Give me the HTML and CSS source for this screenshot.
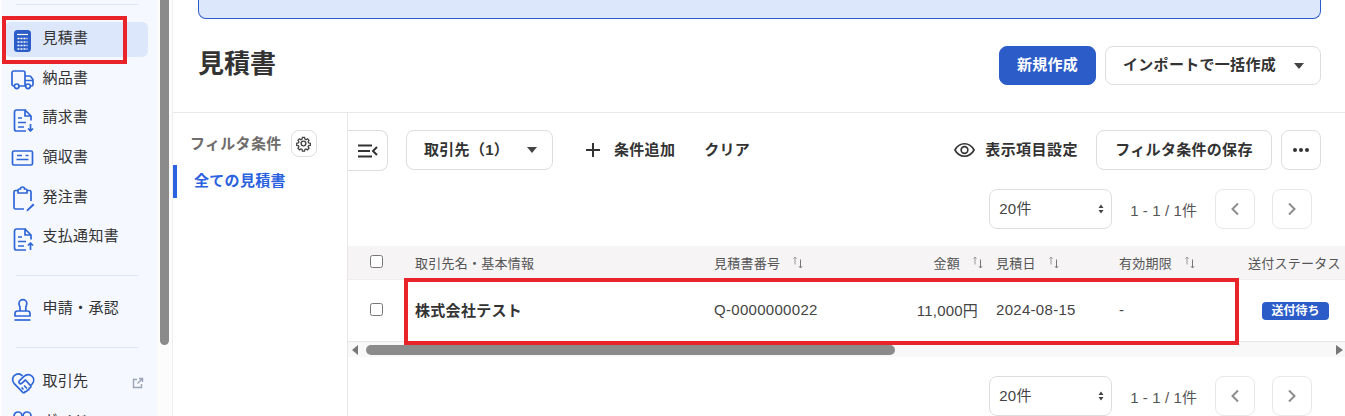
FILE: index.html
```html
<!DOCTYPE html>
<html lang="ja">
<head>
<meta charset="utf-8">
<title>見積書</title>
<link rel="stylesheet" href="styles.css">
</head>
<body>
<div class="page">
  <aside class="side">
    <nav class="nav">
      <hr class="nav-rule nav-rule-top">
      <ul class="nav-group nav-group-first">
        <li class="nav-item active">
          <svg class="nav-icon" viewBox="0 0 24 24"><rect x="3" y="2" width="17" height="22" rx="3.5" fill="#2b5cc8"/><path d="M6 6.5h11" stroke="#fff" stroke-width="1.2"/><path d="M6.5 10.5h10M6.5 14h10M6.5 17.5h10M6.5 21h10" stroke="#fff" stroke-width="1.7" stroke-dasharray="2 1.0"/></svg>
          <span>見積書</span>
        </li>
        <li class="nav-item">
          <svg class="nav-icon" viewBox="0 0 24 24"><g class="ic"><path d="M3.500 19H2.700A1.700 1.700 0 0 1 1 17.300V5.700A1.700 1.700 0 0 1 2.700 4h9.600A1.700 1.700 0 0 1 14 5.700V19H8"/><path d="M14 9h4.500a1.500 1.500 0 0 1 1.200.6l1.700 2.200c.4.500.6 1 .6 1.600v4a1.600 1.600 0 0 1-1.600 1.600h-.4M14 19h.5M14 13.500h8"/><circle cx="5.700" cy="19.300" r="2.300"/><circle cx="17" cy="19.300" r="2.300"/></g></svg>
          <span>納品書</span>
        </li>
        <li class="nav-item">
          <svg class="nav-icon" viewBox="0 0 24 24"><g class="ic"><path d="M15 3H5.500A2 2 0 0 0 3.500 5v17a2 2 0 0 0 2 2H15"/><path d="M14 3l6 6v4.500M14 3v6h6"/><path d="M7 11h4M7 15.500h8M7 20h6"/><path d="M19.500 17v7M17 21.500l2.500 2.500 2.500-2.500"/></g></svg>
          <span>請求書</span>
        </li>
        <li class="nav-item">
          <svg class="nav-icon" viewBox="0 0 24 24"><g class="ic"><rect x="1.500" y="5" width="20" height="14" rx="1.500"/><path d="M5.500 13.500h12M6 9.500h5M14.500 9.500h3"/></g></svg>
          <span>領収書</span>
        </li>
        <li class="nav-item">
          <svg class="nav-icon" viewBox="0 0 24 24"><g class="ic"><path d="M7 4.500H4.500A1.500 1.500 0 0 0 3 6v15.500A1.500 1.500 0 0 0 4.500 23H13"/><path d="M16 4.500h2.500A1.500 1.500 0 0 1 20 6v9"/><path d="M7 4.500a1.500 1.500 0 0 1 1.500-1.500h1a2 2 0 0 1 4 0h1A1.500 1.500 0 0 1 16 4.500V7H7z"/></g><path d="M17 25l-1.500.5.500-2 6-6 1.500 1.500z" fill="#2f66d6"/></svg>
          <span>発注書</span>
        </li>
        <li class="nav-item">
          <svg class="nav-icon" viewBox="0 0 24 24"><g class="ic"><path d="M15 3H5.500A2 2 0 0 0 3.500 5v17a2 2 0 0 0 2 2H15"/><path d="M14 3l6 6v4.500M14 3v6h6"/><path d="M7 11h4M7 15.500h8M7 20h6"/><path d="M19.500 24v-7M17 19.500l2.500-2.500 2.500 2.500"/></g></svg>
          <span>支払通知書</span>
        </li>
      </ul>
      <hr class="nav-rule">
      <ul class="nav-group nav-group-approval">
        <li class="nav-item">
          <svg class="nav-icon" viewBox="0 0 24 24"><g class="ic"><path d="M9 13V9.500C9 8 8 7.500 8 5.500a3.900 3.900 0 0 1 7.800 0c0 2-1 2.500-1 4V13"/><path d="M4 18v-2.500A2.500 2.500 0 0 1 6.500 13h10a2.500 2.500 0 0 1 2.500 2.500V18z"/><path d="M3.500 22h16"/></g></svg>
          <span>申請・承認</span>
        </li>
      </ul>
      <hr class="nav-rule">
      <ul class="nav-group nav-group-links">
        <li class="nav-item">
          <svg class="nav-icon" viewBox="0 0 24 24"><g class="ic"><path d="M11.500 4.800C9.500 3 6.800 2.500 4.500 3.800 1.300 5.500.6 9.500 3 12.300l8.800 9c.9.900 2.300.3 2.200-.8 1.200.6 2.400-.3 2.200-1.500 1.200.4 2.300-.7 1.900-1.900 1.300.2 2.400-1.200 1.400-2.500L14.500 9l-3.800 3.300c-1.900 1.300-3.800-.9-2.200-2.600l4.500-4.400C15.500 3 19 3 21 5.200c2.200 2.300 2 5.500.5 7.300l-1.500 1.700"/><path d="M10.500 16.500l2 2M13 14.500l3 3"/></g></svg>
          <span class="nav-label">取引先</span>
          <svg class="ext" viewBox="0 0 12 12"><path d="M9.500 7v3.500h-8v-8H5M7 1.500h3.500V5M10.300 1.700L5.500 6.500" fill="none" stroke="#9aa3b5" stroke-width="1.400"/></svg>
        </li>
        <li class="nav-item">
          <svg class="nav-icon" viewBox="0 0 24 24"><g class="ic"><circle cx="7" cy="6" r="4"/><circle cx="16" cy="6" r="4"/></g></svg>
          <span class="nav-label">ガイド</span>
          <svg class="ext" viewBox="0 0 12 12"><path d="M9.500 7v3.500h-8v-8H5M7 1.500h3.500V5M10.300 1.700L5.500 6.500" fill="none" stroke="#9aa3b5" stroke-width="1.400"/></svg>
        </li>
      </ul>
    </nav>
    <div class="side-scroll"><div class="side-thumb"></div></div>
  </aside>

  <main class="main">
    <div class="banner"></div>
    <header class="head">
      <h1 class="title">見積書</h1>
      <div class="head-actions">
        <button class="btn btn-primary btn-new">新規作成</button>
        <button class="btn btn-import">インポートで一括作成<span class="caret caret-import"></span></button>
      </div>
    </header>

    <div class="body">
      <section class="filters">
        <div class="filters-head">
          <span class="filters-title">フィルタ条件</span>
          <button class="gear">
            <svg viewBox="0 0 24 24" width="17" height="17"><path d="M10.300 2.500h3.400l.5 2.700 1.800.8 2.300-1.500 2.400 2.400-1.500 2.300.8 1.800 2.700.5v3.400l-2.700.5-.8 1.800 1.500 2.300-2.400 2.400-2.300-1.500-1.800.8-.5 2.700h-3.400l-.5-2.700-1.800-.8-2.300 1.500-2.400-2.400 1.500-2.300-.8-1.800-2.700-.5v-3.400l2.700-.5.8-1.800-1.500-2.300 2.400-2.400 2.300 1.500 1.800-.8z" fill="none" stroke="#444" stroke-width="2" transform="translate(1.200 1.200) scale(.9)"/><circle cx="12" cy="12" r="3.300" fill="none" stroke="#444" stroke-width="2"/></svg>
          </button>
        </div>
        <div class="filter-current">全ての見積書</div>
      </section>

      <section class="content">
        <div class="toolbar">
          <button class="collapse">
            <svg viewBox="0 0 20 14" width="20" height="14"><path d="M0 1.500h14M0 7h12M0 12.500h14" stroke="#333" stroke-width="2"/><path d="M19 3l-4 4 4 4" fill="none" stroke="#333" stroke-width="2"/></svg>
          </button>
          <button class="btn btn-client"><span class="btn-text">取引先（1）</span><span class="caret"></span></button>
          <button class="plain plain-add">
            <svg viewBox="0 0 16 16" width="16" height="16"><path d="M8 1v14M1 8h14" stroke="#333" stroke-width="2"/></svg>
            <span class="btn-text">条件追加</span>
          </button>
          <button class="plain plain-clear"><span class="btn-text">クリア</span></button>
          <button class="plain plain-view">
            <svg viewBox="0 0 22 16" width="21" height="16"><path d="M1 8c2.300-4.300 5.800-6.500 10-6.500S18.700 3.700 21 8c-2.300 4.300-5.800 6.500-10 6.500S3.300 12.300 1 8z" fill="none" stroke="#333" stroke-width="1.700"/><circle cx="11" cy="8" r="3.500" fill="none" stroke="#333" stroke-width="1.700"/></svg>
            <span class="btn-text view-text">表示項目設定</span>
          </button>
          <button class="btn btn-save"><span class="btn-text">フィルタ条件の保存</span></button>
          <button class="btn btn-more">
            <svg viewBox="0 0 18 4" width="18" height="4"><circle cx="3" cy="2" r="2" fill="#333"/><circle cx="9" cy="2" r="2" fill="#333"/><circle cx="15" cy="2" r="2" fill="#333"/></svg>
          </button>
        </div>

        <div class="pager pager-top">
          <div class="size-select"><span class="btn-text">20件</span>
            <svg class="updown" viewBox="0 0 6 10" width="6" height="10"><path d="M3 .5L5.500 4H.5zM3 9.500L.5 6h5z" fill="#444"/></svg>
          </div>
          <span class="range"><span class="btn-text">1 - 1 / 1件</span></span>
          <button class="page-btn"><svg viewBox="0 0 10 14" width="10" height="14"><path d="M8 1.500L2.500 7 8 12.500" fill="none" stroke="#8d8d8d" stroke-width="2"/></svg></button>
          <button class="page-btn page-next"><svg viewBox="0 0 10 14" width="10" height="14"><path d="M2 1.500L7.500 7 2 12.500" fill="none" stroke="#8d8d8d" stroke-width="2"/></svg></button>
        </div>

        <div class="table">
          <div class="tr th">
            <div class="cell cell-check"><input type="checkbox" class="check"></div>
            <div class="cell">取引先名・基本情報</div>
            <div class="cell">見積書番号<svg class="sort" viewBox="0 0 10 13"><path d="M2 8.500V1M.5 2.700L2 1l1.500 1.700" fill="none" stroke="#999" stroke-width="1"/><path d="M7.500 3.500V12M6 10.300L7.500 12 9 10.300" fill="none" stroke="#777" stroke-width="1"/></svg></div>
            <div class="cell cell-right">金額<svg class="sort" viewBox="0 0 10 13"><path d="M2 8.500V1M.5 2.700L2 1l1.500 1.700" fill="none" stroke="#999" stroke-width="1"/><path d="M7.500 3.500V12M6 10.300L7.500 12 9 10.300" fill="none" stroke="#777" stroke-width="1"/></svg></div>
            <div class="cell">見積日<svg class="sort" viewBox="0 0 10 13"><path d="M2 8.500V1M.5 2.700L2 1l1.500 1.700" fill="none" stroke="#999" stroke-width="1"/><path d="M7.500 3.500V12M6 10.300L7.500 12 9 10.300" fill="none" stroke="#777" stroke-width="1"/></svg></div>
            <div class="cell">有効期限<svg class="sort" viewBox="0 0 10 13"><path d="M2 8.500V1M.5 2.700L2 1l1.500 1.700" fill="none" stroke="#999" stroke-width="1"/><path d="M7.500 3.500V12M6 10.300L7.500 12 9 10.300" fill="none" stroke="#777" stroke-width="1"/></svg></div>
            <div class="cell">送付ステータス</div>
          </div>
          <div class="tr td">
            <div class="cell cell-check"><input type="checkbox" class="check"></div>
            <div class="cell cell-name">株式会社テスト</div>
            <div class="cell">Q-0000000022</div>
            <div class="cell cell-right cell-amount">11,000円</div>
            <div class="cell">2024-08-15</div>
            <div class="cell">-</div>
            <div class="cell cell-status"><span class="badge">送付待ち</span></div>
          </div>
        </div>
        <div class="hscroll">
          <span class="arrow arrow-left"></span>
          <div class="hthumb"></div>
          <span class="arrow arrow-right"></span>
        </div>

        <div class="pager pager-bottom">
          <div class="size-select"><span class="btn-text">20件</span>
            <svg class="updown" viewBox="0 0 6 10" width="6" height="10"><path d="M3 .5L5.500 4H.5zM3 9.500L.5 6h5z" fill="#444"/></svg>
          </div>
          <span class="range"><span class="btn-text">1 - 1 / 1件</span></span>
          <button class="page-btn"><svg viewBox="0 0 10 14" width="10" height="14"><path d="M8 1.500L2.500 7 8 12.500" fill="none" stroke="#8d8d8d" stroke-width="2"/></svg></button>
          <button class="page-btn page-next"><svg viewBox="0 0 10 14" width="10" height="14"><path d="M2 1.500L7.500 7 2 12.500" fill="none" stroke="#8d8d8d" stroke-width="2"/></svg></button>
        </div>
      </section>
    </div>
  </main>

  <div class="mark mark-nav"></div>
  <div class="mark mark-row"></div>
</div>
</body>
</html>
```
FILE: styles.css
```css
* { box-sizing: border-box; }
html, body { margin: 0; height: 100%; overflow: hidden; background: #fff; }
body {
  font-family: "Liberation Sans", "Noto Sans CJK JP", sans-serif;
  font-size: 15px;
  letter-spacing: 0.3px;
  color: #333;
}
button { font: inherit; letter-spacing: inherit; color: inherit; background: none; cursor: pointer; }
.page { position: relative; display: flex; width: 1345px; height: 416px; overflow: hidden; }

/* sidebar */
.side { display: flex; width: 172px; height: 416px; flex: none; padding-left: 2px; background: #fcfcfc; }
.nav { width: 155px; height: 416px; background: #f5f8ff; padding: 4px 9px 0 3px; flex: none; overflow: hidden; }
.nav-rule { margin: 0 0 0 11px; width: 122px; height: 1px; border: 0; background: #dde6f7; }
.nav-rule-top { margin-bottom: 17px; }
.nav-group { list-style: none; margin: 0 0 20px; padding: 0; display: flex; flex-direction: column; gap: 4.65px; }
.nav-group-approval { margin-top: 16px; }
.nav-group-links { margin-top: 17px; }
.nav-item { display: flex; align-items: center; height: 35px; padding-left: 6px; border-radius: 6px; white-space: nowrap; flex: none; }
.nav-item span { padding-bottom: 6px; }
.nav-item.active { background: #dce7fb; }
.nav-icon { width: 24px; height: 24px; flex: none; margin-right: 7.500px; overflow: visible; }
.ic { fill: none; stroke: #2f66d6; stroke-width: 1.700; stroke-linejoin: round; }
.nav-label { flex: 1; }
.ext { width: 12px; height: 12px; flex: none; margin-right: 4px; }
.side-scroll { width: 9px; margin-left: 3px; flex: none; }
.side-thumb { width: 9px; height: 345px; background: #8b8b8b; border-radius: 0 0 5px 5px; }

/* main */
.main { flex: 1; min-width: 0; display: flex; flex-direction: column; border-left: 1px solid #eee; }
.banner { height: 19px; margin: 0 24px 0 25px; background: #dce7fb; border: 1px solid #2b5cc8; border-top: 0; border-radius: 0 0 8px 8px; flex: none; }
.head { display: flex; align-items: center; justify-content: space-between; height: 94px; padding: 0 24px 0 25px; border-bottom: 1px solid #e8e8e8; flex: none; }
.title { margin: 0; font-size: 26px; line-height: 39px; padding-bottom: 2px; font-weight: 700; letter-spacing: 0; color: #333; }
.head-actions { display: flex; gap: 9px; }
.btn { height: 39px; border: 1px solid #ddd; border-radius: 8px; background: #fff; font-weight: 700; display: flex; align-items: center; justify-content: center; padding: 0; }
.btn-text { padding-bottom: 4px; }
.btn-primary { background: #2b5cc8; border-color: #2b5cc8; color: #fff; padding-bottom: 4px; }
.btn-new { width: 97px; }
.btn-import { width: 216px; justify-content: flex-start; padding: 0 16px 4px 17px; }
.caret { width: 0; height: 0; border: 5px solid transparent; border-top: 6px solid #444; border-bottom: 0; margin-left: auto; }
.caret-import { margin-top: 4px; }

.body { flex: 1; display: flex; min-height: 0; }
.filters { width: 175px; flex: none; border-right: 1px solid #e8e8e8; padding-top: 17px; }
.filters-head { display: flex; align-items: center; height: 27px; padding-left: 17px; gap: 9px; }
.filters-title { font-weight: 700; color: #6f6c6c; padding-bottom: 2px; }
.gear { width: 26px; height: 27px; border: 1px solid #ddd; border-radius: 8px; padding: 0; display: flex; align-items: center; justify-content: center; background: #fff; }
.filter-current { margin-top: 8px; height: 33px; line-height: 32px; border-left: 4px solid #2b62e0; padding-left: 17px; color: #2b62e0; font-weight: 700; }

.content { flex: 1; min-width: 0; padding-top: 17px; }
.toolbar { display: flex; align-items: flex-start; height: 41px; padding-right: 24px; }
.collapse { width: 40px; height: 41px; border: 1px solid #ddd; border-left: 0; border-radius: 0 8px 8px 0; padding: 0 0 0 10px; display: flex; align-items: center; background: #fff; }
.btn-client { width: 147px; height: 40px; margin-left: 18px; justify-content: flex-start; padding: 0 15px 0 17px; }
.plain { border: 0; padding: 0; height: 40px; font-weight: 700; display: flex; align-items: center; white-space: nowrap; }
.plain-add { margin-left: 32px; gap: 13px; }
.plain-clear { margin-left: 29px; }
.plain-view { margin-left: auto; gap: 10px; }
.view-text { letter-spacing: 0.470px; }
.btn-save { width: 176px; height: 40px; margin-left: 18px; }
.btn-more { width: 40px; height: 40px; margin-left: 9px; }

.pager { display: flex; align-items: center; justify-content: flex-end; height: 40px; padding-right: 33px; }
.pager-top { margin-top: 18px; }
.pager-bottom { margin-top: 19px; }
.size-select { position: relative; width: 123px; height: 40px; border: 1px solid #ddd; border-radius: 8px; padding-left: 9px; display: flex; align-items: center; color: #444; }
.updown { position: absolute; right: 7px; top: 14px; }
.range { margin: 0 18px; color: #555; letter-spacing: 0.100px; }
.page-btn { width: 40px; height: 40px; border: 1px solid #e8e8e8; border-radius: 8px; padding: 0; display: flex; align-items: center; justify-content: center; background: #fff; }
.page-next { margin-left: 17px; }

/* table */
.table { margin-top: 17px; width: 997px; overflow: hidden; }
.tr { display: grid; grid-template-columns: 67px 299px 146px 123px 13px 123px 129px 97px; }
.tr .cell:nth-child(5) { grid-column: 6; }
.tr .cell:nth-child(6) { grid-column: 7; }
.tr .cell:nth-child(7) { grid-column: 8; }
.cell { display: flex; align-items: center; white-space: nowrap; min-width: 0; }
.th { height: 33px; background: #f6f4f5; font-size: 13px; letter-spacing: 0.260px; color: #555; }
.td { height: 63px; border-top: 1px solid #eee; border-bottom: 1px solid #e6e6e6; color: #444; padding-bottom: 2px; }
.cell-check { padding-left: 22px; }
.check { width: 13px; height: 13px; margin: 0 0 2px; }
.td .check { margin-bottom: 0; }
.cell-right { justify-content: flex-end; }
.cell-amount { padding-right: 5px; letter-spacing: 0.200px; }
.cell-name { font-weight: 700; color: #333; }
.cell-status { padding-left: 14px; padding-top: 2px; }
.sort { width: 10px; height: 13px; margin-left: 13px; flex: none; }
.badge { display: inline-block; width: 67px; height: 18px; line-height: 18px; text-align: center; border-radius: 4px; background: #2b5cc8; color: #fff; font-size: 12px; font-weight: 700; letter-spacing: 0; }
.hscroll { display: flex; align-items: center; height: 15px; background: #f8f8f8; padding: 0 2px 0 4px; }
.hthumb { width: 529px; height: 10px; margin-left: 8px; border-radius: 5px; background: #8b8b8b; }
.arrow { width: 0; height: 0; border: 5px solid transparent; flex: none; }
.arrow-left { border-left: 0; border-right: 6px solid #777; }
.arrow-right { border-right: 0; border-left: 7px solid #777; margin-left: auto; }

/* annotation outlines */
.mark { position: absolute; border: 4px solid #e8242a; pointer-events: none; }
.mark-nav { left: 2px; top: 16px; width: 125px; height: 48px; }
.mark-row { left: 404px; top: 278px; width: 835px; height: 67px; }
```
